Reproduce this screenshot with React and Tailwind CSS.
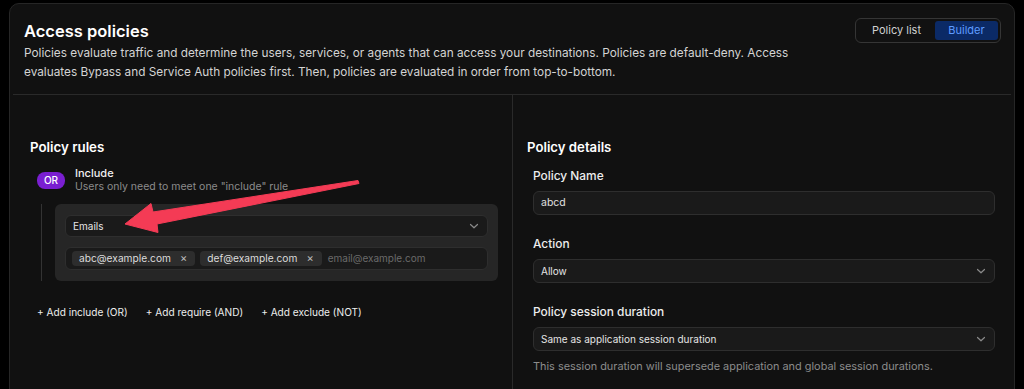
import React from 'react';

// Chevron for the select boxes
const Chevron = () => (
    <svg width="10" height="10" viewBox="0 0 10 10" fill="none" className="shrink-0">
        <path d="M1.5 3.5 L5 6.8 L8.5 3.5" stroke="#8a8a8a" strokeWidth="1.2" strokeLinecap="round" strokeLinejoin="round" />
    </svg>
);

const SelectBox = ({ value, className = '' }) => (
    <div className={`flex items-center justify-between rounded-[6px] border border-[#2e2e2e] bg-[#1a1a1a] pl-[7px] pr-[8px] text-[10px] text-[#e5e5e5] ${className}`}>
        <span>{value}</span>
        <Chevron />
    </div>
);

const Chip = ({ label }) => (
    <div className="flex h-[15px] items-center gap-[9px] rounded-[4px] bg-[#2d2d2d] pl-[7px] pr-[8px] text-[10.2px] text-[#dcdcdc]">
        <span>{label}</span>
        <span className="text-[11px] leading-none text-[#bdbdbd]">×</span>
    </div>
);

const Field = ({ label, children }) => (
    <div className="flex flex-col">
        <div className="mb-[7px] text-[11.9px] font-medium leading-[16px] text-[#ededed]">{label}</div>
        {children}
    </div>
);

function App() {
    return (
        <div className="h-[389px] overflow-hidden bg-black pl-[9px] pt-[3px] font-['Inter',sans-serif]">
            <div className="relative flex h-[400px] w-[1006px] flex-col rounded-t-[10px] border border-[#262626] bg-[#111111]">
                {/* Header */}
                <div className="flex justify-between pl-[14px] pr-[13px] pt-[14px]">
                    <div className="pt-[2px]">
                        <h1 className="text-[16.5px] font-semibold leading-[22px] text-white">Access policies</h1>
                        <p className="mt-[2px] w-[775px] text-[11.8px] leading-[19px] text-[#d4d4d4]">
                            Policies evaluate traffic and determine the users, services, or agents that can access your destinations. Policies are default-deny. Access evaluates Bypass and Service Auth policies first. Then, policies are evaluated in order from top-to-bottom.
                        </p>
                    </div>
                    <div className="flex h-[25px] items-center rounded-[6px] border border-[#353535] p-[2px] text-[11px]">
                        <div className="flex h-full w-[77px] items-center justify-center text-[#d0d0d0]">Policy list</div>
                        <div className="flex h-full w-[63px] items-center justify-center rounded-[3px] bg-[#0b2a66] text-[#5f9cff]">Builder</div>
                    </div>
                </div>

                <div className="mx-[3px] mt-[12px] border-t border-[#2a2a2a]" />

                {/* Body */}
                <div className="flex flex-1 px-[3px]">
                    {/* Left column */}
                    <div className="w-[499px] pl-[17px] pr-[13px] pt-[42px]">
                        <h2 className="text-[13.3px] font-semibold leading-[20px] text-white">Policy rules</h2>
                        <div className="mt-[9px] flex items-start gap-[10px] pl-[7px]">
                            <div className="mt-[6px] flex h-[17px] w-[28px] items-center justify-center rounded-[8px] bg-[#7a1fd1] text-[10px] font-medium text-white">OR</div>
                            <div>
                                <div className="text-[11px] font-medium leading-[14px] text-[#f0f0f0]">Include</div>
                                <div className="text-[10.5px] leading-[13px] text-[#8c8c8c]">Users only need to meet one "include" rule</div>
                            </div>
                        </div>
                        <div className="mt-[11px] flex">
                            <div className="ml-[11px] w-[14px] border-l border-[#333333]" />
                            <div className="flex w-[443px] flex-col gap-[10px] rounded-[6px] bg-[#262626] px-[10px] py-[11px]">
                                <SelectBox value="Emails" className="h-[22px]" />
                                <div className="flex h-[23px] items-center gap-[5px] rounded-[6px] border border-[#2e2e2e] bg-[#1a1a1a] pl-[6px]">
                                    <Chip label="abc@example.com" />
                                    <Chip label="def@example.com" />
                                    <span className="ml-[1px] text-[10px] text-[#6a6a6a]">email@example.com</span>
                                </div>
                            </div>
                        </div>
                        <div className="mt-[24px] flex gap-[18px] pl-[7px] text-[10.1px] leading-[14px] text-[#ededed]">
                            <span>+ Add include (OR)</span>
                            <span>+ Add require (AND)</span>
                            <span>+ Add exclude (NOT)</span>
                        </div>
                    </div>

                    {/* Right column */}
                    <div className="flex-1 border-l border-[#2a2a2a] pl-[14px] pr-[16px] pt-[42px]">
                        <h2 className="text-[13.2px] font-semibold leading-[20px] text-white">Policy details</h2>
                        <div className="flex flex-col gap-[21px] pl-[6px] pt-[11px]">
                            <Field label="Policy Name">
                                <div className="flex h-[24px] items-center rounded-[6px] border border-[#2e2e2e] bg-[#1a1a1a] pl-[7px] text-[10.5px] text-[#e0e0e0]">abcd</div>
                            </Field>
                            <Field label="Action">
                                <SelectBox value="Allow" className="h-[24px]" />
                            </Field>
                            <Field label="Policy session duration">
                                <SelectBox value="Same as application session duration" className="h-[24px]" />
                                <div className="mt-[8px] text-[10.9px] leading-[14px] text-[#8c8c8c]">This session duration will supersede application and global session durations.</div>
                            </Field>
                        </div>
                    </div>
                </div>

                {/* Annotation arrow */}
                <svg className="pointer-events-none absolute left-0 top-0" width="1006" height="400" viewBox="0 0 1006 400">
                    <polygon
                        points="348,176.5 349,179.5 147,220 148,228.5 115,220 141,199.5 143,208"
                        fill="#f43b55"
                        stroke="#f43b55"
                        strokeWidth="1"
                        strokeLinejoin="round"
                    />
                </svg>
            </div>
        </div>
    );
}

export default App;
